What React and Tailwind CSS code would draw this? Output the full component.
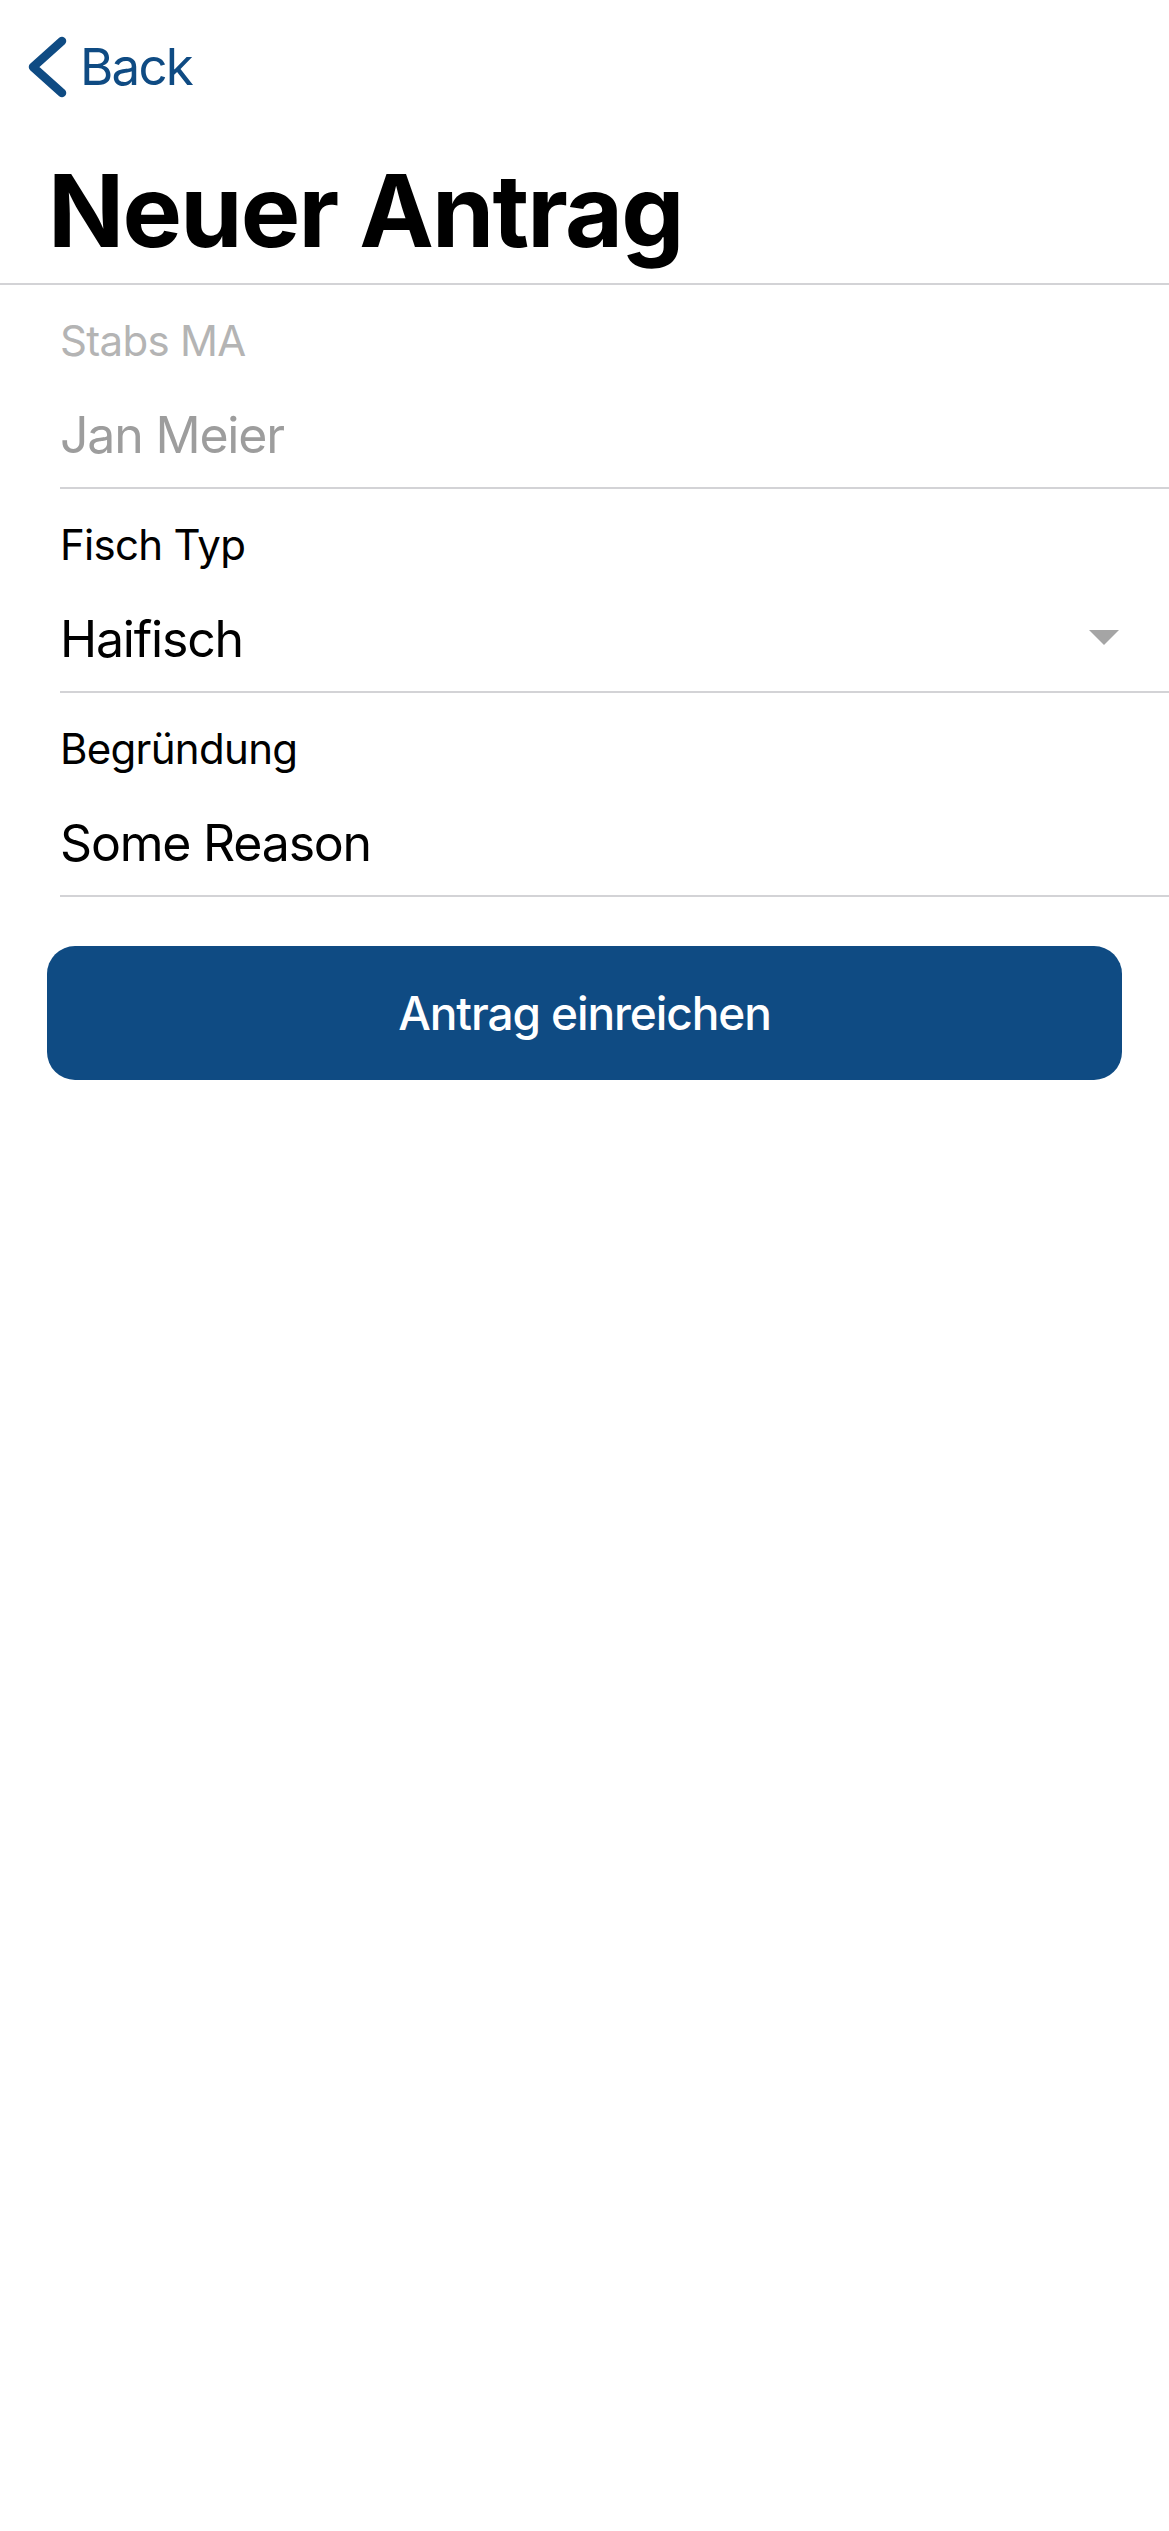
import React from 'react';

const fields = [
  { id: 'staff', label: 'Stabs MA', value: 'Jan Meier', disabled: true },
  { id: 'fish', label: 'Fisch Typ', value: 'Haifisch', select: true },
  { id: 'reason', label: 'Begründung', value: 'Some Reason' },
];

const ChevronLeft = () => (
  <svg width="44" height="64" viewBox="0 0 44 64" fill="none" className="shrink-0">
    <path d="M35 6 L6 32 L35 58" stroke="#0f4b83" strokeWidth="8.5" strokeLinecap="round" strokeLinejoin="round" />
  </svg>
);

const Field = ({ label, value, disabled, select }) => (
  <div className="border-b-2 border-[#d3d3d6] pt-[31px] pb-[22px]">
    <p className={`text-[42px] leading-[50px] tracking-[-0.7px] ${disabled ? 'text-[#b4b4b4]' : 'text-black'}`}>{label}</p>
    <div className="mt-[39px] flex items-center justify-between pr-[50px]">
      <p className={`text-[50px] leading-[60px] tracking-[-1.2px] ${disabled ? 'text-[#9d9d9d]' : 'text-black'}`}>{value}</p>
      {select && (
        <svg width="30" height="15" viewBox="0 0 30 15" className="-mt-[4px]">
          <path d="M0 0 H30 L15 15 Z" fill="#a5a5a5" />
        </svg>
      )}
    </div>
  </div>
);

export default function App() {
  return (
    <div className="min-h-[2531px] w-full bg-white font-['Inter',sans-serif] antialiased">
      {/* Nav bar */}
      <div className="flex items-center pt-[35px] pl-[27px]">
        <ChevronLeft />
        <span className="ml-[9px] text-[51px] leading-[60px] tracking-[-1.8px] text-[#0f4b83]">Back</span>
      </div>

      {/* Title */}
      <h1 className="mt-[52px] pl-[48px] pb-[12px] text-[100px] font-bold leading-[120px] tracking-[-1.8px] text-black border-b-2 border-[#d3d3d6]">
        Neuer Antrag
      </h1>

      {/* Form */}
      <div className="pl-[60px]">
        {fields.map((f) => (
          <Field key={f.id} {...f} />
        ))}
      </div>

      <div className="px-[47px] pt-[49px]">
        <button className="flex h-[134px] w-full items-center justify-center rounded-[28px] bg-[#0f4b83] text-[46px] font-medium tracking-[-1.1px] text-white">
          Antrag einreichen
        </button>
      </div>
    </div>
  );
}
